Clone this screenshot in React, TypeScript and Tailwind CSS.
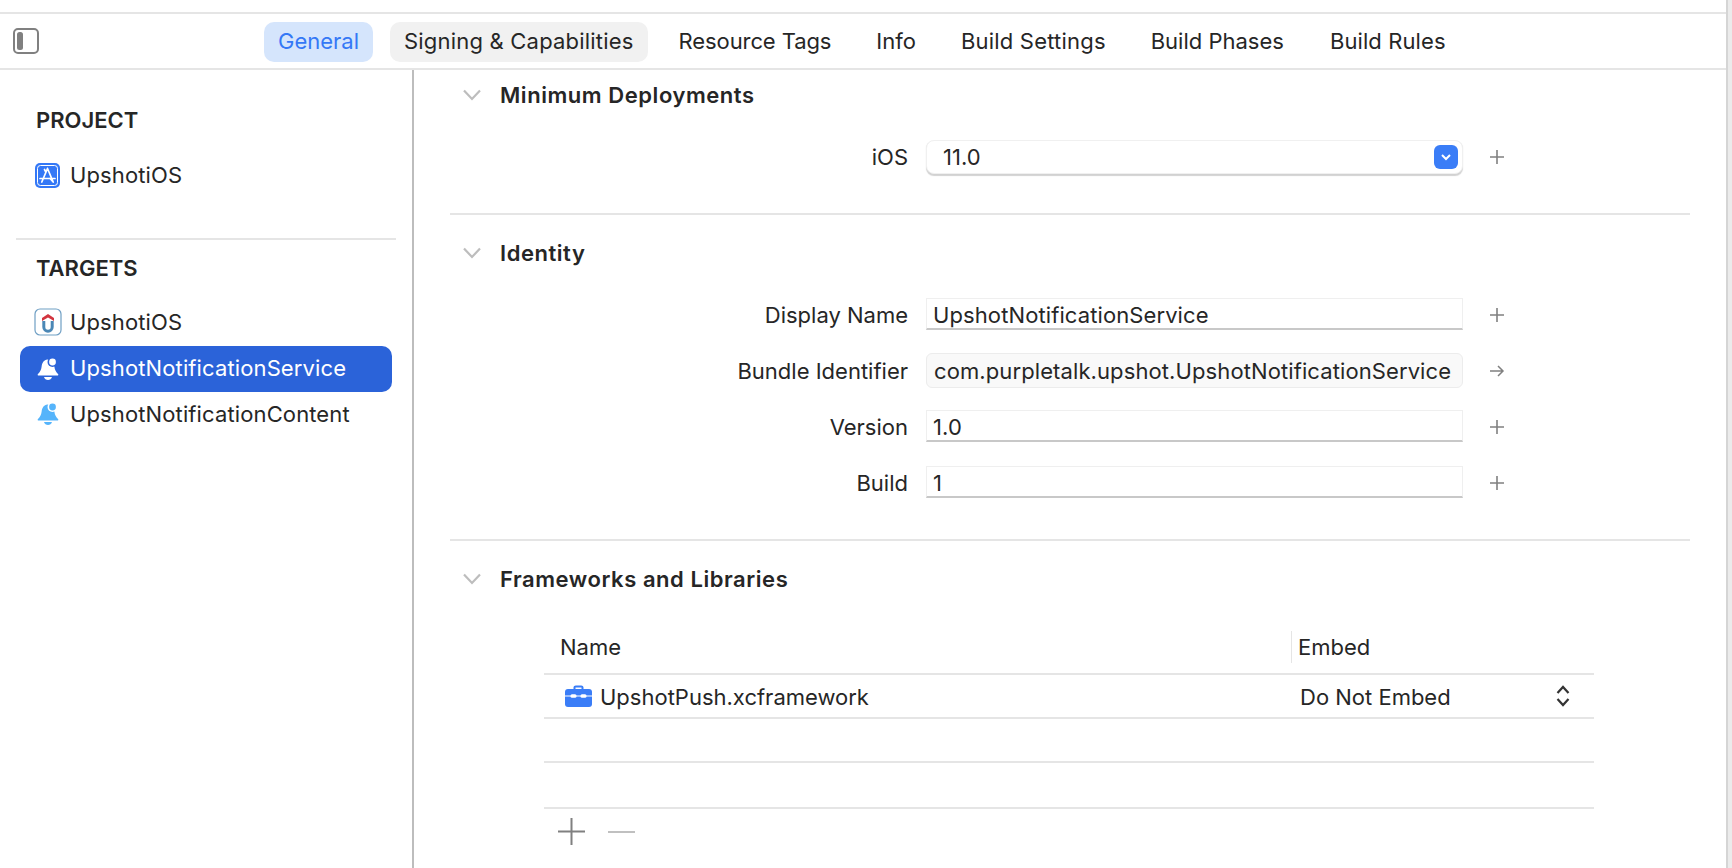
import type { ReactNode } from 'react';

const tabs = [
    { name: 'Resource Tags', className: 'tracking-[-0.1px]' },
    { name: 'Info', className: '' },
    { name: 'Build Settings', className: 'tracking-[0.2px]' },
    { name: 'Build Phases', className: '' },
    { name: 'Build Rules', className: 'ml-[1px] tracking-[0.1px]' },
];

function Bell({ color, bg }: { color: string; bg: string }) {
    return (
        <svg width="22" height="24" viewBox="0 0 22 24">
            <path d="M10.500 2.500C6.800 2.800 5 6 4.600 9.800 4.200 13 3 15 1 17c-.7.8-.3 1.600.6 1.600h18.800c.9 0 1.300-.8.6-1.600-2-2-3.200-4-3.600-7.200C17 6 14.200 2.800 10.500 2.500Z" fill={color} />
            <path d="M7 20h8c-.5 2-2.200 3-4 3s-3.500-1-4-3Z" fill={color} />
            <circle cx="15.500" cy="5" r="5" fill={bg} />
            <circle cx="15.500" cy="5" r="3.400" fill={color} />
        </svg>
    );
}

function Plus() {
    return (
        <svg width="14" height="14" viewBox="0 0 14 14" stroke="#808080" strokeWidth="1.600">
            <path d="M7 0v14M0 7h14" />
        </svg>
    );
}

function Chevron() {
    return (
        <svg width="18" height="12" viewBox="0 0 18 12" fill="none" stroke="#bdbdbd" strokeWidth="2.200">
            <path d="M1 1.500l8 8.500 8-8.500" />
        </svg>
    );
}

function Row({ label, action, className, children }: { label: string; action?: ReactNode; className: string; children: ReactNode }) {
    return (
        <div className={`flex items-center ${className}`}>
            <div className="w-[458px] text-right">{label}</div>
            <div className="ml-[18px] w-[537px]">{children}</div>
            <div className="ml-[26px] w-[16px] flex justify-center">{action ?? <Plus />}</div>
        </div>
    );
}

function TextField({ value }: { value: string }) {
    return (
        <div className="h-[32px] mb-[2px] pt-[2px] flex items-center pl-[6px] tracking-[0.1px] border border-[#efefef] border-b-2 border-b-[#c8c8c8]">{value}</div>
    );
}

function SectionTitle({ title, className }: { title: string; className: string }) {
    return (
        <div className={`flex items-center pl-[13px] gap-[19px] ${className}`}>
            <Chevron />
            <span className="font-semibold tracking-[0.55px]">{title}</span>
        </div>
    );
}

function SidebarRow({ icon, label, selected, className }: { icon: ReactNode; label: string; selected?: boolean; className?: string }) {
    return (
        <div className={`flex items-center h-[46px] ml-[20px] w-[372px] rounded-[10px] pl-[15px] tracking-[0.12px] ${selected ? 'bg-[#2b63d9] text-white' : ''} ${className ?? ''}`}>
            <div className="w-[25px] flex justify-center">{icon}</div>
            <span className={`ml-[10px] ${selected ? 'pb-[2px]' : ''}`}>{label}</span>
        </div>
    );
}

export default function App() {
    return (
        <div className="h-screen overflow-hidden bg-[#ebebeb] pr-[4px] text-[22px] leading-none text-[#262626] font-['Inter',sans-serif]">
            <div className="h-full bg-white pt-[12px] border-r-2 border-[#d5d5d5] flex flex-col">
                <div className="h-[58px] shrink-0 border-y-2 border-[#e5e5e5] flex items-center pl-[13px]">
                    <svg width="26" height="26" viewBox="0 0 26 26" fill="none">
                        <rect x="1" y="1" width="24" height="24" rx="4" stroke="#808080" strokeWidth="2" />
                        <rect x="4" y="4" width="6" height="18" rx="2.500" fill="#808080" />
                    </svg>
                    <div className="ml-[225px] mt-[2px] flex gap-[17px]">
                        <div className="h-[40px] px-[14px] pb-[2px] flex items-center rounded-[10px] bg-[#d5e5fc] text-[#3478f6]">General</div>
                        <div className="h-[40px] px-[14px] pb-[2px] flex items-center rounded-[10px] bg-[#f1f1f1] tracking-[0.2px]">Signing &amp; Capabilities</div>
                        {tabs.map((tab) => (
                            <div key={tab.name} className={`h-[40px] px-[14px] pb-[2px] flex items-center ${tab.className}`}>{tab.name}</div>
                        ))}
                    </div>
                </div>

                <div className="flex-1 flex min-h-0">
                    <div className="w-[414px] shrink-0 border-r-2 border-[#bdbdbd]">
                        <div className="pl-[36px] pt-[39px] font-semibold">PROJECT</div>
                        <SidebarRow
                            className="mt-[21px]"
                            label="UpshotiOS"
                            icon={
                                <svg width="25" height="25" viewBox="0 0 25 25" fill="none">
                                    <rect width="25" height="25" rx="5" fill="#3478f6" />
                                    <rect x="2.500" y="2.500" width="20" height="20" rx="3" stroke="#fff" strokeWidth="1" />
                                    <path d="M12.500 5.500L6.800 19M12.500 5.500L18.200 19M10.800 9L9.500 6.500M5 15.500h15M15 15.500l3.200 3.500" stroke="#fff" strokeWidth="1.700" strokeLinecap="round" />
                                </svg>
                            }
                        />
                        <div className="mt-[40px] ml-[16px] w-[380px] h-[2px] bg-[#e5e5e5]" />
                        <div className="pl-[36px] pt-[17px] font-semibold">TARGETS</div>
                        <SidebarRow
                            className="mt-[20px]"
                            label="UpshotiOS"
                            icon={
                                <svg width="28" height="28" viewBox="0 0 28 28" fill="none" className="shrink-0">
                                    <rect x="1" y="1" width="26" height="26" rx="5" fill="#fff" stroke="#6f9fc4" strokeWidth="1.200" />
                                    <path d="M8 10l6-4 6 4v3l-6-3.500L8 13z" fill="#d2353f" />
                                    <path d="M9.800 13v6a4.200 4.200 0 008.400 0v-6" stroke="#4b87b5" strokeWidth="3" />
                                </svg>
                            }
                        />
                        <SidebarRow selected label="UpshotNotificationService" icon={<Bell color="#ffffff" bg="#2b63d9" />} className="mt-[1px]" />
                        <SidebarRow label="UpshotNotificationContent" icon={<Bell color="#55b4fb" bg="#ffffff" />} className="-mt-[1px]" />
                    </div>

                    <div className="flex-1 pl-[36px]">
                        <SectionTitle title="Minimum Deployments" className="h-[50px]" />
                        <Row label="iOS" className="mt-[20px] h-[34px]">
                            <div className="h-[34px] flex items-center justify-between rounded-[8px] bg-white pl-[16px] pr-[4px] border border-[#f0f0f0] shadow-[0_1.500px_1px_rgba(0,0,0,0.18)]">
                                <span>11.0</span>
                                <div className="w-[24px] h-[24px] rounded-[6px] bg-[#3a7df7] flex items-center justify-center">
                                    <svg width="10" height="7" viewBox="0 0 10 7" fill="none" stroke="#fff" strokeWidth="2">
                                        <path d="M1 1l4 4 4-4" />
                                    </svg>
                                </div>
                            </div>
                        </Row>
                        <div className="mt-[39px] w-[1240px] h-[2px] bg-[#e5e5e5]" />
                        <SectionTitle title="Identity" className="h-[50px] mt-[13px]" />
                        <Row label="Display Name" className="mt-[20px]">
                            <TextField value="UpshotNotificationService" />
                        </Row>
                        <Row
                            label="Bundle Identifier"
                            className="mt-[21px]"
                            action={
                                <svg width="16" height="14" viewBox="0 0 16 14" fill="none" stroke="#808080" strokeWidth="1.500">
                                    <path d="M1 7h13M9 2l5 5-5 5" />
                                </svg>
                            }
                        >
                            <div className="h-[35px] flex items-center pl-[7px] tracking-[0.1px] rounded-[6px] bg-[#f9f9f9] border border-[#ececec]">com.purpletalk.upshot.UpshotNotificationService</div>
                        </Row>
                        <Row label="Version" className="mt-[22px]">
                            <TextField value="1.0" />
                        </Row>
                        <Row label="Build" className="mt-[22px]">
                            <TextField value="1" />
                        </Row>
                        <div className="mt-[39px] w-[1240px] h-[2px] bg-[#e5e5e5]" />
                        <SectionTitle title="Frameworks and Libraries" className="h-[50px] mt-[13px]" />

                        <div className="ml-[94px] w-[1050px] mt-[27px]">
                            <div className="h-[44px] flex items-start border-b-2 border-[#e5e5e5]">
                                <div className="w-[747px] pl-[16px] h-[32px] flex items-center">Name</div>
                                <div className="h-[32px] w-px bg-[#e5e5e5]" />
                                <div className="pl-[6px] h-[32px] flex items-center">Embed</div>
                            </div>
                            <div className="h-[44px] flex items-center border-b-2 border-[#e5e5e5]">
                                <div className="ml-[21px]">
                                    <svg width="27" height="22" viewBox="0 0 27 22" className="block">
                                        <path d="M8.500 5V2.500C8.500 1.200 9.500 .4 10.800 .4h5.400c1.300 0 2.300 .8 2.300 2.100V5h-2V2.400H10.500V5z" fill="#3a7df7" />
                                        <rect y="4" width="27" height="18" rx="3" fill="#3a7df7" />
                                        <rect y="10.500" width="27" height="1" fill="#fff" />
                                        <rect x="5.500" y="9.300" width="6" height="3.400" rx="1.500" fill="#fff" />
                                        <rect x="15.500" y="9.300" width="6" height="3.400" rx="1.500" fill="#fff" />
                                    </svg>
                                </div>
                                <div className="ml-[8px] w-[700px] pt-[2px]">UpshotPush.xcframework</div>
                                <div className="w-[256px] pt-[2px]">Do Not Embed</div>
                                <svg width="14" height="22" viewBox="0 0 14 22" fill="none" stroke="#333" strokeWidth="2.200">
                                    <path d="M1.500 8l5.500-6 5.500 6M1.500 14l5.500 6 5.500-6" />
                                </svg>
                            </div>
                            <div className="h-[44px] border-b-2 border-[#e5e5e5]" />
                            <div className="h-[46px] border-b-2 border-[#e5e5e5]" />
                            <div className="flex items-center mt-[9px] ml-[14px] gap-[23px]">
                                <svg width="27" height="27" viewBox="0 0 27 27" stroke="#808080" strokeWidth="2">
                                    <path d="M13.500 0v27M0 13.500h27" />
                                </svg>
                                <div className="w-[27px] h-[2px] bg-[#c0c0c0]" />
                            </div>
                        </div>
                    </div>
                </div>
            </div>
        </div>
    );
}
